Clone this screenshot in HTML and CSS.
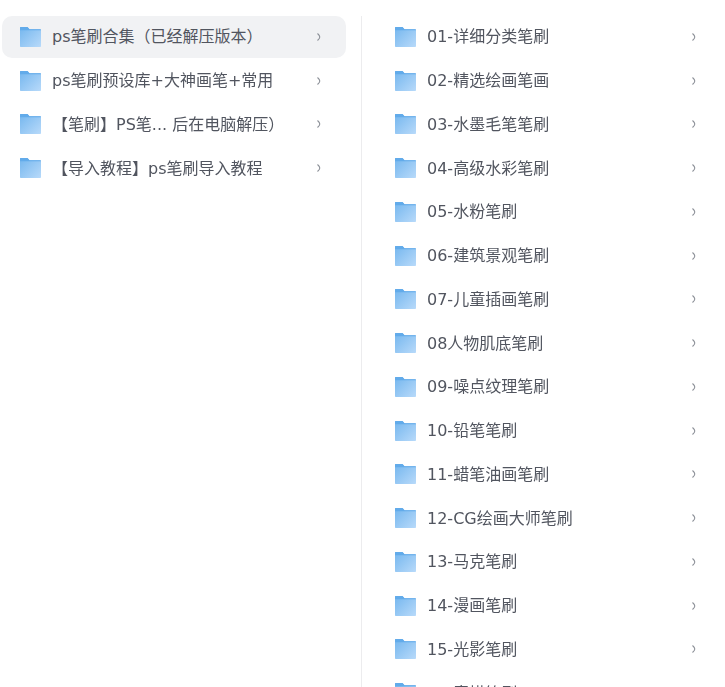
FILE: index.html
```html
<!DOCTYPE html>
<html lang="zh-CN">
<head>
  <meta charset="UTF-8">
  <title>ps笔刷合集</title>
  <link rel="stylesheet" href="styles.css">
</head>
<body>
  <svg class="defs" width="0" height="0">
    <defs>
      <linearGradient id="fold" x1="0" y1="0" x2="1" y2="1">
        <stop offset="0" stop-color="#74b6ee"/>
        <stop offset="1" stop-color="#b8dafa"/>
      </linearGradient>
      <symbol id="folder" viewBox="0 0 21 20">
        <path d="M0 1C0 .4.4 0 1 0h6.500l2 2.200H20c.6 0 1 .4 1 1V19c0 .6-.4 1-1 1H1c-.6 0-1-.4-1-1z" fill="url(#fold)"/>
        <path d="M0 1C0 .4.4 0 1 0h6.500l2 2.200H20c.6 0 1 .4 1 1H0z" fill="#62abea"/>
      </symbol>
      <symbol id="chev" viewBox="0 0 6 10">
        <path d="M1.500 1.500C3.200 3 3.800 4 3.800 5S3.200 7 1.500 8.500" fill="none" stroke="#8b8f97" stroke-width="1.100"/>
      </symbol>
    </defs>
  </svg>
  <div class="panes">
    <div class="pane pane-left">
      <div class="row active"><svg class="ico"><use href="#folder"/></svg><span class="name">ps笔刷合集（已经解压版本）</span><svg class="chev"><use href="#chev"/></svg></div>
      <div class="row"><svg class="ico"><use href="#folder"/></svg><span class="name">ps笔刷预设库+大神画笔+常用</span><svg class="chev"><use href="#chev"/></svg></div>
      <div class="row"><svg class="ico"><use href="#folder"/></svg><span class="name">【笔刷】PS笔... 后在电脑解压）</span><svg class="chev"><use href="#chev"/></svg></div>
      <div class="row"><svg class="ico"><use href="#folder"/></svg><span class="name">【导入教程】ps笔刷导入教程</span><svg class="chev"><use href="#chev"/></svg></div>
    </div>
    <div class="pane pane-right">
      <div class="row"><svg class="ico"><use href="#folder"/></svg><span class="name">01-详细分类笔刷</span><svg class="chev"><use href="#chev"/></svg></div>
      <div class="row"><svg class="ico"><use href="#folder"/></svg><span class="name">02-精选绘画笔画</span><svg class="chev"><use href="#chev"/></svg></div>
      <div class="row"><svg class="ico"><use href="#folder"/></svg><span class="name">03-水墨毛笔笔刷</span><svg class="chev"><use href="#chev"/></svg></div>
      <div class="row"><svg class="ico"><use href="#folder"/></svg><span class="name">04-高级水彩笔刷</span><svg class="chev"><use href="#chev"/></svg></div>
      <div class="row"><svg class="ico"><use href="#folder"/></svg><span class="name">05-水粉笔刷</span><svg class="chev"><use href="#chev"/></svg></div>
      <div class="row"><svg class="ico"><use href="#folder"/></svg><span class="name">06-建筑景观笔刷</span><svg class="chev"><use href="#chev"/></svg></div>
      <div class="row"><svg class="ico"><use href="#folder"/></svg><span class="name">07-儿童插画笔刷</span><svg class="chev"><use href="#chev"/></svg></div>
      <div class="row"><svg class="ico"><use href="#folder"/></svg><span class="name">08人物肌底笔刷</span><svg class="chev"><use href="#chev"/></svg></div>
      <div class="row"><svg class="ico"><use href="#folder"/></svg><span class="name">09-噪点纹理笔刷</span><svg class="chev"><use href="#chev"/></svg></div>
      <div class="row"><svg class="ico"><use href="#folder"/></svg><span class="name">10-铅笔笔刷</span><svg class="chev"><use href="#chev"/></svg></div>
      <div class="row"><svg class="ico"><use href="#folder"/></svg><span class="name">11-蜡笔油画笔刷</span><svg class="chev"><use href="#chev"/></svg></div>
      <div class="row"><svg class="ico"><use href="#folder"/></svg><span class="name">12-CG绘画大师笔刷</span><svg class="chev"><use href="#chev"/></svg></div>
      <div class="row"><svg class="ico"><use href="#folder"/></svg><span class="name">13-马克笔刷</span><svg class="chev"><use href="#chev"/></svg></div>
      <div class="row"><svg class="ico"><use href="#folder"/></svg><span class="name">14-漫画笔刷</span><svg class="chev"><use href="#chev"/></svg></div>
      <div class="row"><svg class="ico"><use href="#folder"/></svg><span class="name">15-光影笔刷</span><svg class="chev"><use href="#chev"/></svg></div>
      <div class="row"><svg class="ico"><use href="#folder"/></svg><span class="name">16-素描笔刷</span><svg class="chev"><use href="#chev"/></svg></div>
    </div>
  </div>
</body>
</html>
```

FILE: styles.css
```css
* { margin: 0; padding: 0; box-sizing: border-box; }
html, body { height: 100%; overflow: hidden; background: #fff; }
body {
  font-family: "DejaVu Sans", "Noto Sans CJK SC", sans-serif;
  font-size: 16px; color: #51555f;
}
.defs { display: block; }

/* Panes */
.panes { display: flex; height: 687px; padding-top: 15.5px; overflow: hidden; filter: blur(0.3px); }
.pane-left { width: 362px; flex: none; padding-left: 2px; padding-right: 15px; border-right: 1px solid #ececee; }
.pane-right { flex: 1; padding-left: 15px; padding-right: 4px; }

/* Rows */
.row {
  display: flex; align-items: center; gap: 11px;
  height: 42.5px; margin-bottom: 1.25px; padding-left: 18px; padding-right: 24px;
  border-radius: 10px;
}
.row.active { background: #f1f2f4; }
.ico { width: 21px; height: 20px; flex: none; }
.name { flex: 1; white-space: nowrap; line-height: 21px; }
.chev { width: 6px; height: 10px; flex: none; }
```
